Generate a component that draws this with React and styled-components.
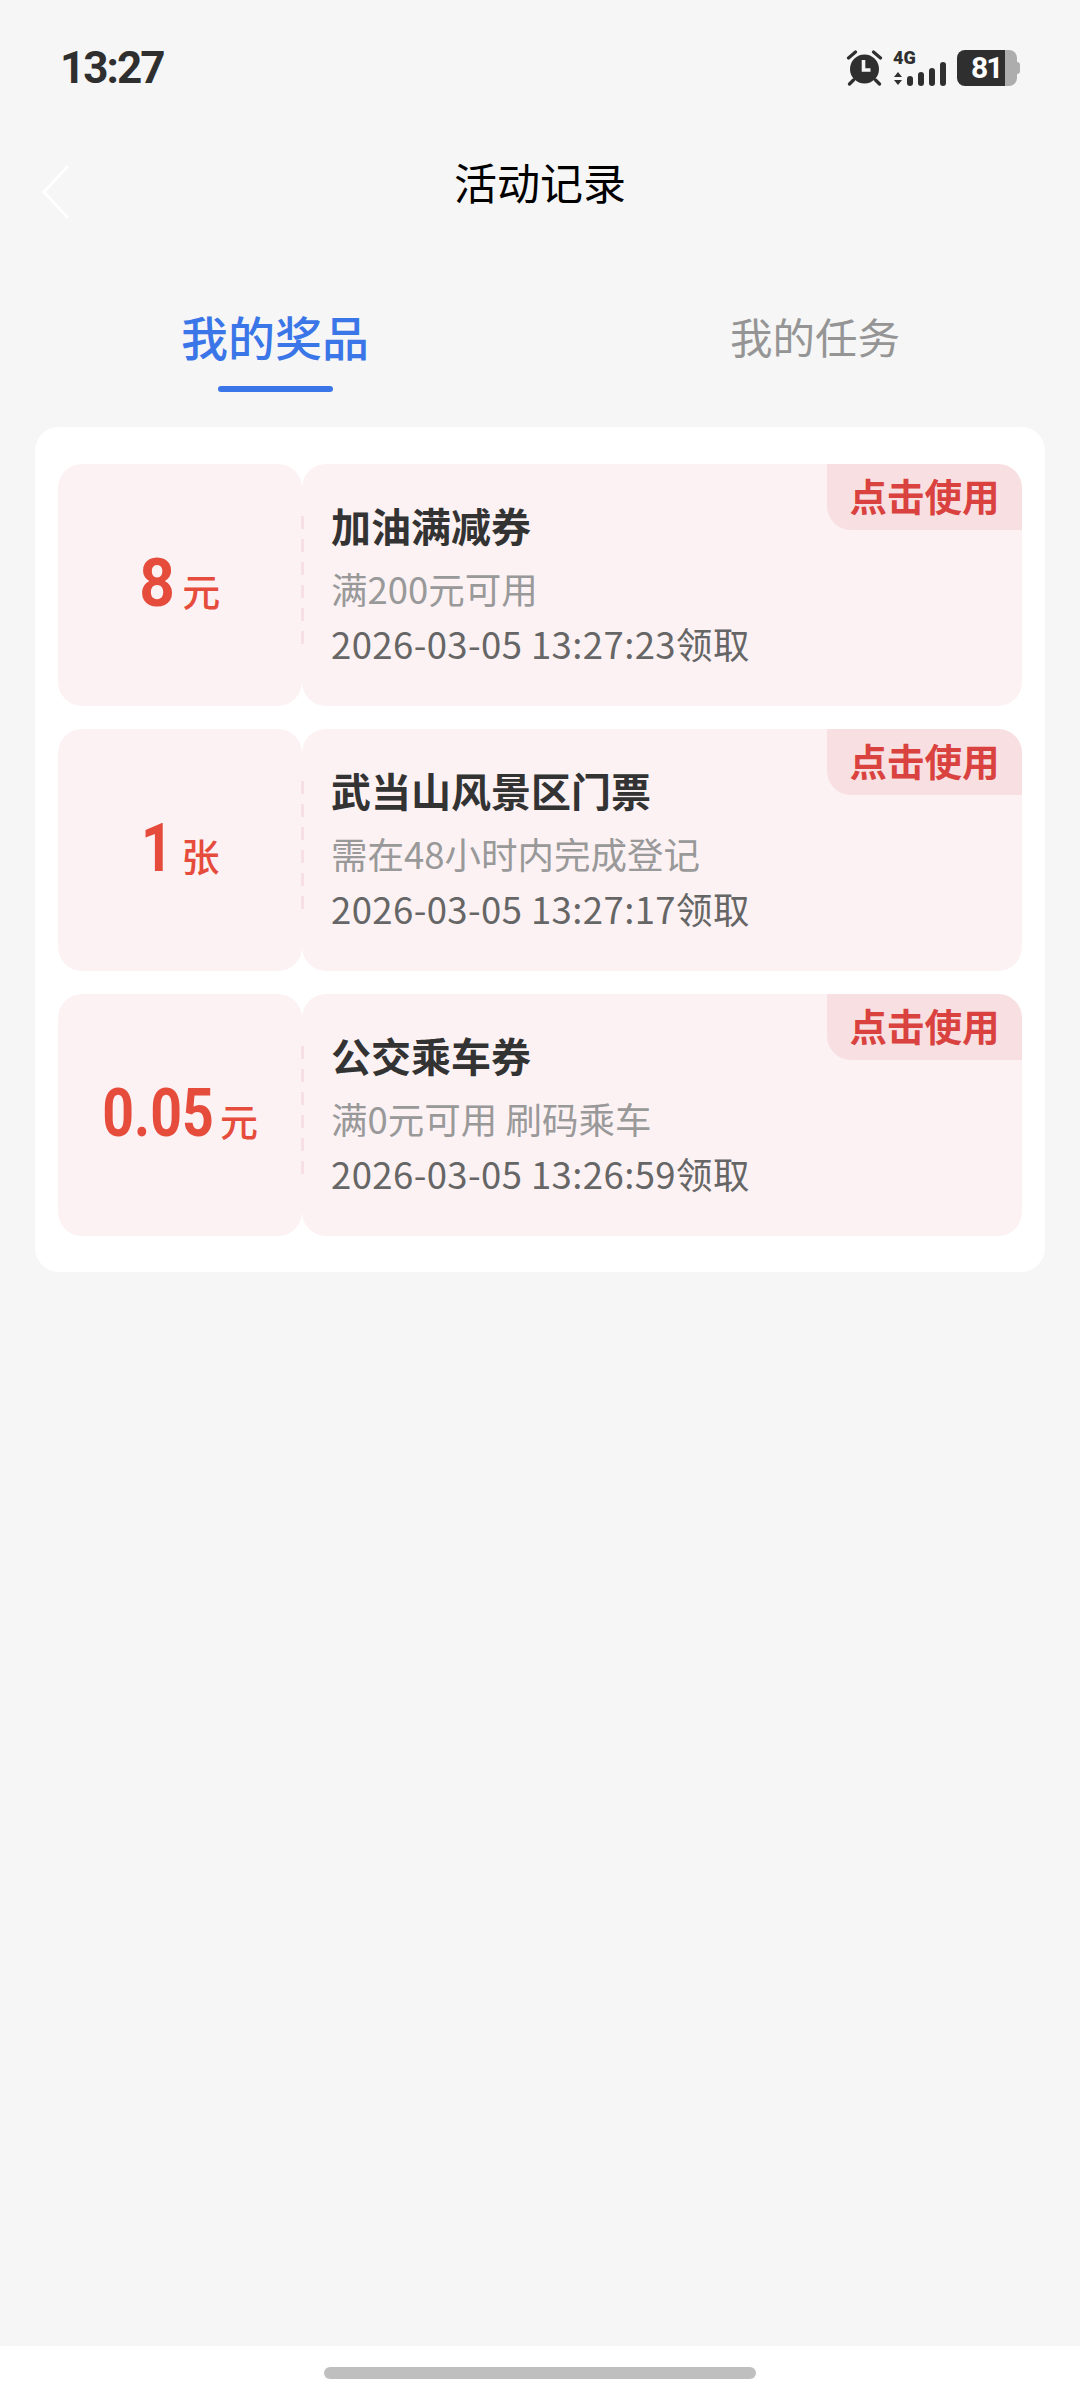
import React from "react";
import styled, { createGlobalStyle } from "styled-components";

const cjk = `"Noto Sans CJK SC", "Noto Sans", sans-serif`;

const Global = createGlobalStyle`
  html, body { margin: 0; padding: 0; background: #f6f6f6; }
  * { box-sizing: border-box; }
  body { font-family: ${cjk}; }
`;

const Page = styled.div`
  width: 1080px;
  height: 2400px;
  display: flex;
  flex-direction: column;
  background: #f6f6f6;
`;

const StatusBar = styled.div`
  height: 138px;
  padding: 47px 63px 0 60px;
  display: flex;
  justify-content: space-between;
  align-items: flex-start;
`;

const Time = styled.div`
  font-family: "Roboto", "Noto Sans", sans-serif;
  font-weight: 700;
  font-size: 44px;
  line-height: 42px;
  color: #2f2f2f;
  letter-spacing: -2px;
`;

const StatusIcons = styled.div`
  display: flex;
  align-items: flex-end;
  gap: 10px;
  margin-top: -1px;
`;

const Battery = styled.div`
  position: relative;
  width: 60px;
  height: 36px;
  border-radius: 8px;
  background: linear-gradient(90deg, #2f2f2f 0 48px, #adadad 48px);
  display: flex;
  align-items: center;
  padding-left: 14px;
  color: #fff;
  font-family: "Roboto", sans-serif;
  font-weight: 700;
  font-size: 30px;
  letter-spacing: -2px;
  line-height: 36px;
  &::after {
    content: "";
    position: absolute;
    right: -3px;
    top: 12px;
    width: 3px;
    height: 12px;
    border-radius: 0 3px 3px 0;
    background: #adadad;
  }
`;

const NavBar = styled.div`
  height: 93px;
  padding: 0 42px 8px;
  position: relative;
  display: flex;
  align-items: center;
  justify-content: center;
`;

const Back = styled.svg`
  position: absolute;
  left: 38px;
  top: 26px;
`;

const Title = styled.h1`
  margin: 0;
  font-size: 43px;
  font-weight: 400;
  line-height: 60px;
  color: #000;
`;

const Tabs = styled.div`
  margin-top: 65px;
  height: 131px;
  display: grid;
  grid-template-columns: 550px 530px;
`;

const Tab = styled.div`
  display: flex;
  flex-direction: column;
  align-items: center;
  padding-top: 10px;
  font-size: ${(p) => (p.$active ? 47 : 42.5)}px;
  font-weight: ${(p) => (p.$active ? 500 : 400)};
  line-height: 60px;
  color: ${(p) => (p.$active ? "#3b76e8" : "#959595")};
`;

const Underline = styled.div`
  width: 115px;
  height: 6px;
  margin-top: 20px;
  border-radius: 3px;
  background: #3b76e8;
`;

const Panel = styled.div`
  margin: 0 35px;
  padding: 37px 23px 36px;
  background: #fff;
  border-radius: 24px;
  display: flex;
  flex-direction: column;
  gap: 23px;
`;

const Coupon = styled.div`
  height: 242px;
  display: grid;
  grid-template-columns: 244px 1fr;
`;

const Stub = styled.div`
  border-radius: 24px;
  background: #fcf2f4;
  display: flex;
  align-items: baseline;
  justify-content: center;
  padding-top: 80px;
  color: #e64c3c;
`;

const Amount = styled.span`
  display: inline-block;
  font-family: "Roboto", sans-serif;
  font-weight: 700;
  font-size: 66px;
  line-height: 80px;
  transform: scaleX(${(p) => p.$scale});
  transform-origin: right center;
  margin-left: ${(p) => -(1 - p.$scale) * p.$em}em;
`;

const Unit = styled.span`
  font-size: 38px;
  font-weight: 500;
  line-height: 80px;
  margin-left: ${(p) => p.$gap}px;
`;

const Body = styled.div`
  position: relative;
  border-radius: 24px;
  background: #fcf2f4;
  padding: 36px 0 0 29px;
  &::before {
    content: "";
    position: absolute;
    left: -1px;
    top: 52px;
    width: 3px;
    height: 128px;
    background: repeating-linear-gradient(180deg, #f7e0e5 0 13px, transparent 13px 23px);
  }
`;

const Tag = styled.div`
  position: absolute;
  top: 0;
  right: 0;
  width: 195px;
  height: 66px;
  padding-bottom: 5px;
  border-radius: 0 24px 0 24px;
  background: #f8dfe1;
  color: #d9423f;
  font-size: 37.5px;
  font-weight: 700;
  line-height: 61px;
  text-align: center;
`;

const Name = styled.div`
  font-size: 40px;
  font-weight: 700;
  line-height: 50px;
  color: #333;
`;

const Rule = styled.div`
  margin-top: 15px;
  font-size: 36.5px;
  line-height: 48px;
  color: #999;
`;

const Stamp = styled.div`
  margin-top: 7px;
  font-size: 36.5px;
  letter-spacing: 0.4px;
  line-height: 48px;
  color: #666;
  white-space: nowrap;
`;

const Spacer = styled.div`
  flex: 1;
`;

const HomeBar = styled.div`
  height: 54px;
  background: #fff;
  display: flex;
  justify-content: center;
  padding-top: 21px;
`;

const HomeHandle = styled.div`
  width: 432px;
  height: 12px;
  border-radius: 6px;
  background: #bfbfbf;
`;

const Alarm = () => (
  <svg width="37" height="36" viewBox="0 0 36 36" aria-hidden="true">
    <circle cx="18" cy="19" r="14.5" fill="#2f2f2f" />
    <path d="M17 10v10h7" fill="none" stroke="#f6f6f6" strokeWidth="3.6" />
    <path d="M2 8l7-6M34 8l-7-6M7 30l-4 4M29 30l4 4" fill="none" stroke="#2f2f2f" strokeWidth="3.2" strokeLinecap="round" />
  </svg>
);

const Signal = () => (
  <svg width="54" height="40" viewBox="0 -4 54 40" aria-hidden="true">
    <text x="0" y="14" fontFamily="Roboto, sans-serif" fontWeight="900" fontSize="18" fill="#2f2f2f">4G</text>
    <path d="M5 22l4 5H1zM5 35l-4-5h8z" fill="#2f2f2f" />
    <rect x="14" y="26" width="6" height="10" rx="3" fill="#2f2f2f" />
    <rect x="25" y="22" width="6" height="14" rx="3" fill="#2f2f2f" />
    <rect x="36" y="18" width="6" height="18" rx="3" fill="#2f2f2f" />
    <rect x="47" y="12" width="6" height="24" rx="3" fill="#2f2f2f" />
  </svg>
);

const coupons = [
  { amount: "8", em: 0.57, scale: 0.94, unit: "元", gap: 7, name: "加油满减券", rule: "满200元可用", time: "2026-03-05 13:27:23领取" },
  { amount: "1", em: 0.57, scale: 0.84, unit: "张", gap: 9, name: "武当山风景区门票", rule: "需在48小时内完成登记", time: "2026-03-05 13:27:17领取" },
  { amount: "0.05", em: 1.98, scale: 0.84, unit: "元", gap: 6, name: "公交乘车券", rule: "满0元可用 刷码乘车", time: "2026-03-05 13:26:59领取" },
];

export default function App() {
  return (
    <Page>
      <Global />
      <StatusBar>
        <Time>13:27</Time>
        <StatusIcons>
          <Alarm />
          <Signal />
          <Battery>81</Battery>
        </StatusIcons>
      </StatusBar>
      <NavBar>
        <Back width="32" height="56" viewBox="0 0 32 56" aria-hidden="true">
          <path d="M30 2L6 28l24 26" fill="none" stroke="#fff" strokeWidth="3" />
        </Back>
        <Title>活动记录</Title>
      </NavBar>
      <Tabs>
        <Tab $active>
          我的奖品
          <Underline />
        </Tab>
        <Tab>我的任务</Tab>
      </Tabs>
      <Panel>
        {coupons.map((c) => (
          <Coupon key={c.name}>
            <Stub>
              <Amount $em={c.em} $scale={c.scale}>{c.amount}</Amount>
              <Unit $gap={c.gap}>{c.unit}</Unit>
            </Stub>
            <Body>
              <Tag>点击使用</Tag>
              <Name>{c.name}</Name>
              <Rule>{c.rule}</Rule>
              <Stamp>{c.time}</Stamp>
            </Body>
          </Coupon>
        ))}
      </Panel>
      <Spacer />
      <HomeBar>
        <HomeHandle />
      </HomeBar>
    </Page>
  );
}
